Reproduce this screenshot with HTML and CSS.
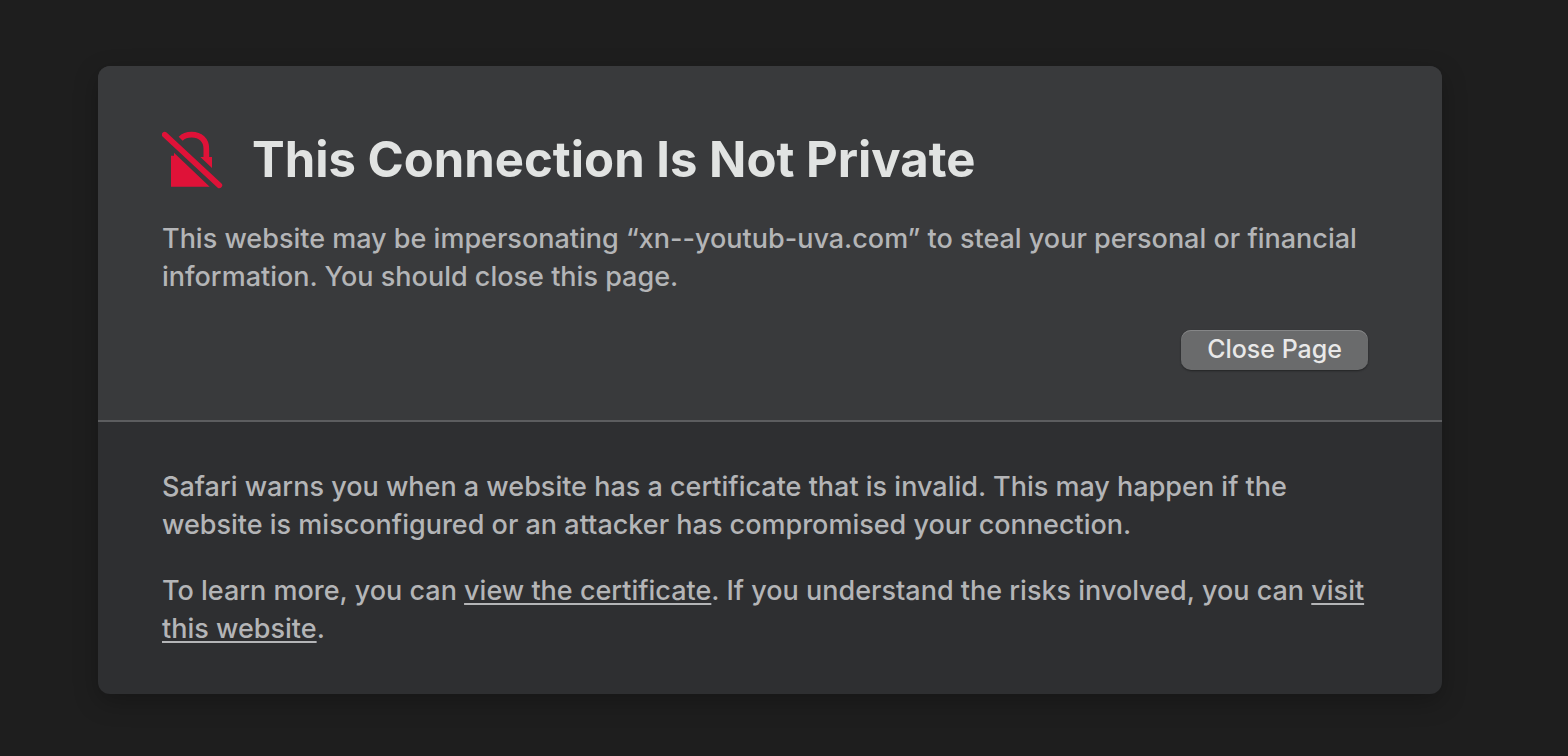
FILE: index.html
```
<!DOCTYPE html>
<html lang="en">
<head>
    <meta charset="UTF-8">
    <meta name="viewport" content="width=device-width, initial-scale=1.0">
    <title>This Connection Is Not Private</title>
    <link rel="stylesheet" href="styles.css">
</head>
<body>
    <main class="card">
        <section class="warning">
            <div class="title">
                <svg class="icon" viewBox="36 30 186 180" aria-hidden="true">
                    <path class="shackle" d="M92 56 Q104 44 125 44 C151 44 169 60 169 86 V114"/>
                    <path class="fill" d="M72 98 L179 200 H63 V107 H72 Z M151 111 H186 V144 Z"/>
                    <path class="slash" d="M44 44 L208 196"/>
                </svg>
                <h1>This Connection Is Not Private</h1>
            </div>
            <p>This website may be impersonating “xn--youtub-uva.com” to steal your personal or financial information. You should close this page.</p>
            <div class="buttons">
                <button class="button" type="button">Close Page</button>
            </div>
        </section>
        <section class="details">
            <p>Safari warns you when a website has a certificate that is invalid. This may happen if the website is misconfigured or an attacker has compromised your connection.</p>
            <p>To learn more, you can <a href="#certificate">view the certificate</a>. If you understand the risks involved, you can <a href="#visit">visit this website</a>.</p>
        </section>
    </main>
</body>
</html>
```
FILE: styles.css
```
body {
    margin: 0;
    padding: 66px 126px 62px 98px;
    background-color: #1e1e1e;
    color: #b4b5b7;
    font-family: Inter, "Liberation Sans", sans-serif;
    font-size: 27px;
    font-weight: 450;
    line-height: 38px;
}

.card {
    border-radius: 12px;
    background-color: #2e2f31;
    box-shadow: 0 8px 24px rgba(0, 0, 0, 0.25);
    overflow: hidden;
}

.warning {
    padding: 64px 64px 50px;
    background-color: #393a3c;
    border-bottom: 2px solid #5c5d5f;
}

.title {
    display: flex;
    align-items: center;
    gap: 28px;
    margin-bottom: 30px;
}

.icon {
    width: 62px;
    height: 60px;
    flex: none;
}

.fill {
    fill: #df1238;
}

.shackle,
.slash {
    fill: none;
    stroke: #df1238;
    stroke-width: 17;
}

.slash {
    stroke-linecap: round;
}

h1 {
    margin: 0;
    color: #e1e3e2;
    font-size: 49px;
    font-weight: 700;
    line-height: 60px;
}

p {
    margin: 0;
}

.buttons {
    display: flex;
    justify-content: flex-end;
    margin-top: 34px;
    padding-right: 10px;
}

.button {
    height: 40px;
    padding: 0 26px 2px;
    border: none;
    border-radius: 10px;
    background-color: #6a6b6c;
    box-shadow: inset 0 1px 0 #858687, 0 1px 2px rgba(0, 0, 0, 0.4);
    color: #e8e8e8;
    font-family: inherit;
    font-size: 25px;
    font-weight: 450;
    line-height: 38px;
    cursor: pointer;
}

.details {
    display: flex;
    flex-direction: column;
    gap: 28px;
    padding: 46px 64px;
}

a {
    color: inherit;
    text-decoration-thickness: 2px;
    text-underline-offset: 3px;
}
```
